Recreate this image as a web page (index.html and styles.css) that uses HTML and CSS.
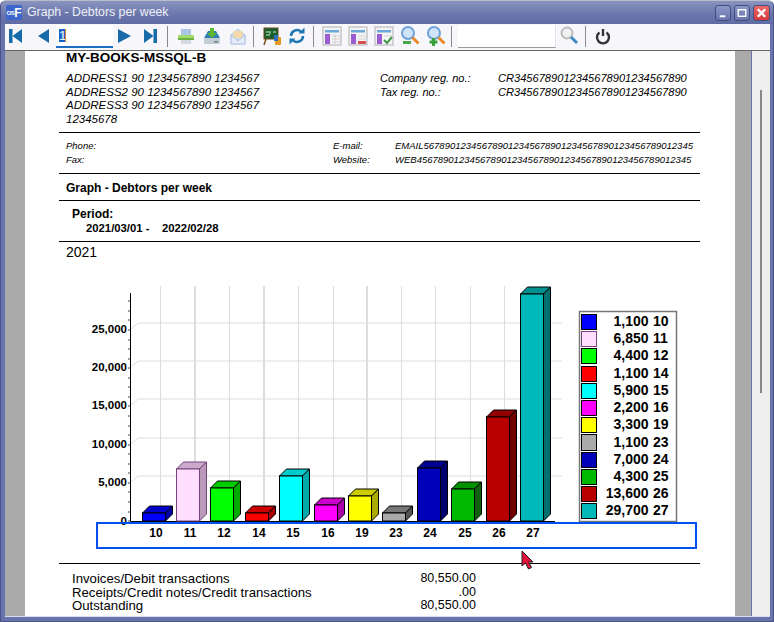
FILE: index.html
```html
<!DOCTYPE html>
<html lang="en">
<head>
<meta charset="utf-8">
<title>Graph - Debtors per week</title>
<link rel="stylesheet" href="styles.css">
</head>
<body>
<div class="window">
  <header class="titlebar">
    <div class="app-icon"><span class="app-os">OS</span><span class="app-f">F</span></div>
    <div class="title">Graph - Debtors per week</div>
    <div class="win-buttons">
      <div class="win-btn"><svg viewBox="0 0 15 15"><rect class="glyph" x="4" y="10" width="6" height="2"/></svg></div>
      <div class="win-btn"><svg viewBox="0 0 15 15"><rect class="glyph-line" x="3.5" y="4" width="8" height="7"/></svg></div>
      <div class="win-btn win-close"><svg viewBox="0 0 16 15"><path class="glyph-x" d="M4 3.5l8 8M12 3.5l-8 8"/></svg></div>
    </div>
  </header>

  <nav class="toolbar">
    <svg class="ico" viewBox="0 0 20 20"><rect class="nav" x="3" y="3" width="3.5" height="14"/><path class="nav" d="M16 3v14L6.500 10z"/></svg>
    <svg class="ico ml7" viewBox="0 0 20 20"><path class="nav" d="M16 3v14L5 10z"/></svg>
    <div class="page-input"><span class="sel">1</span><span class="caret"></span></div>
    <svg class="ico ml2" viewBox="0 0 20 20"><path class="nav" d="M3 3v14L16 10z"/></svg>
    <svg class="ico ml5" viewBox="0 0 20 20"><path class="nav" d="M4 3v14l9.500-7z"/><rect class="nav" x="13.5" y="3" width="3.5" height="14"/></svg>
    <div class="sep ml7"></div>

    <svg class="ico ml8" viewBox="0 0 20 20"><rect x="5" y="3" width="10" height="8" fill="#a9c6e4"/><rect x="2" y="9" width="16" height="5" rx="1" fill="#a2dc6e"/><rect x="2" y="12" width="16" height="2" fill="#6cb044"/><rect x="5" y="14" width="10" height="4" fill="#d4dae2"/></svg>
    <svg class="ico ml6" viewBox="0 0 20 20"><path d="M2 12L6 5h8l4 7z" fill="#2f7fb5"/><rect x="2" y="12" width="16" height="6" rx="1" fill="#c3cdd3"/><rect x="12" y="15" width="4" height="1.5" fill="#6f7d85"/><path d="M8 2h4v5h3l-5 5-5-5h3z" fill="#5cb82e"/></svg>
    <svg class="ico ml6" viewBox="0 0 20 20"><path d="M3 9l7-6 7 6v9H3z" fill="#cddcf0" stroke="#b3c1e2"/><rect x="5.500" y="5" width="9" height="7" fill="#f6d9a8"/><path d="M3 9l7 6 7-6v9H3z" fill="#e3ebf8" stroke="#b3c1e2"/></svg>
    <div class="sep ml5"></div>

    <svg class="ico ml8" viewBox="0 0 20 20"><rect x="2" y="2" width="14" height="11" fill="#17602c" stroke="#6b4a1c"/><path d="M4 6h3M8 5v3M11 6h3M4 9h4" stroke="#d7efc4" fill="none"/><path d="M4 13l-2 6M13 13l2 6" stroke="#7a4f1c" stroke-width="1.5" fill="none"/><rect x="13" y="11" width="6" height="8" rx="1" fill="#e89a20"/><rect x="12" y="9" width="4" height="6" fill="#2f6fc0"/></svg>
    <svg class="ico ml5" viewBox="0 0 20 20"><path class="refresh" d="M4 10a6 6 0 0 1 10-4.400"/><path class="refresh" d="M16 10a6 6 0 0 1-10 4.400"/><path class="refresh-head" d="M11.500 7.500h6v-6z"/><path class="refresh-head" d="M8.500 12.500h-6v6z"/></svg>
    <div class="sep ml6"></div>

    <svg class="ico ml8" viewBox="0 0 20 20"><rect class="sheet" x="1" y="1" width="18" height="18"/><rect class="band" x="3" y="4" width="14" height="2.5"/><rect class="pillar" x="3" y="8" width="5" height="10"/><path class="cells" d="M10 10h8M10 13h8M10 16h8M13 8v10"/></svg>
    <svg class="ico ml6" viewBox="0 0 20 20"><rect class="sheet" x="1" y="1" width="18" height="18"/><rect class="band" x="3" y="4" width="14" height="2.5"/><rect class="pillar" x="3" y="8" width="5" height="10"/><path class="cells" d="M10 10h8M10 13h8"/><rect x="10" y="15" width="8" height="3" fill="#d8504e"/></svg>
    <svg class="ico ml6" viewBox="0 0 20 20"><rect class="sheet" x="1" y="1" width="18" height="18"/><rect class="band" x="3" y="4" width="14" height="2.5"/><rect class="pillar" x="3" y="8" width="5" height="10"/><path class="cells" d="M10 10h8"/><path class="tick" d="M10 14l3 3 5-6"/></svg>
    <svg class="ico ml6" viewBox="0 0 20 20"><circle class="lens" cx="8" cy="7" r="6"/><path class="handle" d="M12.500 11.500l6 6"/><rect x="3" y="15" width="8" height="3" fill="#4aa84a"/></svg>
    <svg class="ico ml6" viewBox="0 0 20 20"><circle class="lens" cx="8" cy="7" r="6"/><path class="handle" d="M12.500 11.500l6 6"/><path d="M6 12h3v2.500h2.500v3H9V20H6v-2.500H3.500v-3H6z" fill="#3aa03a"/></svg>
    <div class="sep ml5"></div>

    <div class="search-input"></div>
    <svg class="ico ml3" viewBox="0 0 20 20"><circle class="lens-grey" cx="8" cy="7" r="5.500"/><path class="handle-blue" d="M12 11l6 6"/></svg>
    <div class="sep ml6"></div>
    <svg class="ico ml7" viewBox="0 0 20 20"><path class="power" d="M6.500 6.500a6 6 0 1 0 7 0"/><path class="power" d="M10 3v7"/></svg>
  </nav>

  <main class="viewer">
    <div class="gutter"></div>
    <section class="page">
      <div class="company">MY-BOOKS-MSSQL-B</div>
      <div class="address">
        <div class="addr-left">
          <div>ADDRESS1 90 1234567890 1234567</div>
          <div>ADDRESS2 90 1234567890 1234567</div>
          <div>ADDRESS3 90 1234567890 1234567</div>
          <div>12345678</div>
        </div>
        <div class="addr-labels">
          <div>Company reg. no.:</div>
          <div>Tax reg. no.:</div>
        </div>
        <div class="addr-values">
          <div>CR3456789012345678901234567890</div>
          <div>CR3456789012345678901234567890</div>
        </div>
      </div>
      <div class="rule"></div>
      <div class="contact">
        <div>Phone:</div>
        <div>E-mail:</div>
        <div class="c-value">EMAIL567890123456789012345678901234567890123456789012345</div>
        <div>Fax:</div>
        <div>Website:</div>
        <div class="c-value">WEB4567890123456789012345678901234567890123456789012345</div>
      </div>
      <div class="rule"></div>
      <div class="report-title">Graph - Debtors per week</div>
      <div class="rule"></div>
      <div class="period">
        <div class="period-label">Period:</div>
        <div class="period-range">2021/03/01 -&nbsp;&nbsp;&nbsp; 2022/02/28</div>
      </div>
      <div class="rule"></div>
      <div class="year">2021</div>

      <svg class="chart" viewBox="25 262 710 301" width="710" height="301">
        <g class="grid">
          <path d="M130 330l8-7H562M130 368l8-7H562M130 406l8-7H562M130 445l8-7H562M130 483l8-7H562"/>
          <path d="M160.500 286V514M229.500 286V514M298.500 286V514M333.500 286V514M401.500 286V514M435.500 286V514M470.500 286V514M504.500 286V514"/>
          <path class="grid-thick" d="M195 286V514M264 286V514M367 286V514"/>
        </g>
        <g class="axis">
          <path d="M130.500 293V521.500H555"/>
          <path class="ticks" d="M128 330h2M128 368h2M128 406h2M128 445h2M128 483h2M128 521h2M128 301h2M128 311h2M128 320h2M128 340h2M128 349h2M128 359h2M128 378h2M128 387h2M128 397h2M128 416h2M128 426h2M128 435h2M128 454h2M128 464h2M128 473h2M128 492h2M128 502h2M128 512h2"/>
        </g>
        <g class="y-labels">
          <text x="127" y="333">25,000</text>
          <text x="127" y="371">20,000</text>
          <text x="127" y="409">15,000</text>
          <text x="127" y="448">10,000</text>
          <text x="127" y="486">5,000</text>
          <text x="127" y="525">0</text>
        </g>

        <g class="bar b10"><polygon class="t" points="142.500,513 149.500,506 172.500,506 165.500,513"/><polygon class="s" points="165.500,513 172.500,506 172.500,514 165.500,521"/><rect class="f" x="142.500" y="513" width="23" height="8"/></g>
        <g class="bar b11"><polygon class="t" points="176.500,469 183.500,462 206.500,462 199.500,469"/><polygon class="s" points="199.500,469 206.500,462 206.500,514 199.500,521"/><rect class="f" x="176.500" y="469" width="23" height="52"/></g>
        <g class="bar b12"><polygon class="t" points="210.500,488 217.500,481 240.500,481 233.500,488"/><polygon class="s" points="233.500,488 240.500,481 240.500,514 233.500,521"/><rect class="f" x="210.500" y="488" width="23" height="33"/></g>
        <g class="bar b14"><polygon class="t" points="245.500,513 252.500,506 275.500,506 268.500,513"/><polygon class="s" points="268.500,513 275.500,506 275.500,514 268.500,521"/><rect class="f" x="245.500" y="513" width="23" height="8"/></g>
        <g class="bar b15"><polygon class="t" points="279.500,476 286.500,469 309.500,469 302.500,476"/><polygon class="s" points="302.500,476 309.500,469 309.500,514 302.500,521"/><rect class="f" x="279.500" y="476" width="23" height="45"/></g>
        <g class="bar b16"><polygon class="t" points="314.500,505 321.500,498 344.500,498 337.500,505"/><polygon class="s" points="337.500,505 344.500,498 344.500,514 337.500,521"/><rect class="f" x="314.500" y="505" width="23" height="16"/></g>
        <g class="bar b19"><polygon class="t" points="348.500,496 355.500,489 378.500,489 371.500,496"/><polygon class="s" points="371.500,496 378.500,489 378.500,514 371.500,521"/><rect class="f" x="348.500" y="496" width="23" height="25"/></g>
        <g class="bar b23"><polygon class="t" points="382.500,513 389.500,506 412.500,506 405.500,513"/><polygon class="s" points="405.500,513 412.500,506 412.500,514 405.500,521"/><rect class="f" x="382.500" y="513" width="23" height="8"/></g>
        <g class="bar b24"><polygon class="t" points="417.500,468 424.500,461 447.500,461 440.500,468"/><polygon class="s" points="440.500,468 447.500,461 447.500,514 440.500,521"/><rect class="f" x="417.500" y="468" width="23" height="53"/></g>
        <g class="bar b25"><polygon class="t" points="451.500,489 458.500,482 481.500,482 474.500,489"/><polygon class="s" points="474.500,489 481.500,482 481.500,514 474.500,521"/><rect class="f" x="451.500" y="489" width="23" height="32"/></g>
        <g class="bar b26"><polygon class="t" points="486.500,417 493.500,410 516.500,410 509.500,417"/><polygon class="s" points="509.500,417 516.500,410 516.500,514 509.500,521"/><rect class="f" x="486.500" y="417" width="23" height="104"/></g>
        <g class="bar b27"><polygon class="t" points="520.500,294 527.500,287 550.500,287 543.500,294"/><polygon class="s" points="543.500,294 550.500,287 550.500,514 543.500,521"/><rect class="f" x="520.500" y="294" width="23" height="227"/></g>

        <g class="x-labels">
          <text x="156" y="537">10</text><text x="190" y="537">11</text><text x="224" y="537">12</text><text x="259" y="537">14</text>
          <text x="293" y="537">15</text><text x="328" y="537">16</text><text x="362" y="537">19</text><text x="396" y="537">23</text>
          <text x="430" y="537">24</text><text x="465" y="537">25</text><text x="499" y="537">26</text><text x="533" y="537">27</text>
        </g>

        <rect class="legend-box" x="579.500" y="311.500" width="97" height="210"/>
        <g class="bar b10"><rect class="f" x="581.500" y="314.500" width="15" height="15"/></g>
        <g class="bar b11"><rect class="f" x="581.500" y="331.500" width="15" height="15"/></g>
        <g class="bar b12"><rect class="f" x="581.500" y="348.500" width="15" height="15"/></g>
        <g class="bar b14"><rect class="f" x="581.500" y="366.500" width="15" height="15"/></g>
        <g class="bar b15"><rect class="f" x="581.500" y="383.500" width="15" height="15"/></g>
        <g class="bar b16"><rect class="f" x="581.500" y="400.500" width="15" height="15"/></g>
        <g class="bar b19"><rect class="f" x="581.500" y="417.500" width="15" height="15"/></g>
        <g class="bar b23"><rect class="f" x="581.500" y="434.500" width="15" height="16"/></g>
        <g class="bar b24"><rect class="f" x="581.500" y="452.500" width="15" height="15"/></g>
        <g class="bar b25"><rect class="f" x="581.500" y="469.500" width="15" height="15"/></g>
        <g class="bar b26"><rect class="f" x="581.500" y="486.500" width="15" height="15"/></g>
        <g class="bar b27"><rect class="f" x="581.500" y="503.500" width="15" height="15"/></g>
        <g class="legend-amt">
          <text x="648.500" y="326">1,100</text><text x="648.500" y="343">6,850</text><text x="648.500" y="360">4,400</text><text x="648.500" y="378">1,100</text>
          <text x="648.500" y="395">5,900</text><text x="648.500" y="412">2,200</text><text x="648.500" y="429">3,300</text><text x="648.500" y="447">1,100</text>
          <text x="648.500" y="464">7,000</text><text x="648.500" y="481">4,300</text><text x="648.500" y="498">13,600</text><text x="648.500" y="515">29,700</text>
        </g>
        <g class="legend-code">
          <text x="653" y="326">10</text><text x="653" y="343">11</text><text x="653" y="360">12</text><text x="653" y="378">14</text>
          <text x="653" y="395">15</text><text x="653" y="412">16</text><text x="653" y="429">19</text><text x="653" y="447">23</text>
          <text x="653" y="464">24</text><text x="653" y="481">25</text><text x="653" y="498">26</text><text x="653" y="515">27</text>
        </g>
      </svg>

      <div class="rule"></div>
      <div class="totals">
        <div class="total-row"><span>Invoices/Debit transactions</span><span class="amount">80,550.00</span></div>
        <div class="total-row"><span>Receipts/Credit notes/Credit transactions</span><span class="amount">.00</span></div>
        <div class="total-row"><span>Outstanding</span><span class="amount">80,550.00</span></div>
      </div>
    </section>
    <div class="gutter gutter-right"></div>
    <div class="scrollbar"><div class="thumb"></div></div>
  </main>

  <div class="highlight"></div>
  <svg class="cursor" viewBox="0 0 14 20" width="14" height="20"><path d="M1 1v15l3.500-3 3 6 3-1.500-3-5.500H12z"/></svg>
</div>
</body>
</html>
```

FILE: styles.css
```css
* { box-sizing: border-box; }
html, body { margin: 0; padding: 0; background: #fff; }
body { font-family: "Liberation Sans", Arial, sans-serif; color: #000; }

.window {
  position: relative;
  width: 774px;
  height: 622px;
  overflow: hidden;
  display: flex;
  flex-direction: column;
  padding: 0 3px 5px 4px;
  background: #6874ab;
  border: 1px solid #4a5488;
  border-top-color: #b9bcc9;
  border-radius: 6px 6px 0 0;
}

/* Title bar */
.titlebar {
  flex: none;
  height: 23px;
  margin: 0 -3px 0 -4px;
  padding: 4px 3px 0 5px;
  display: flex;
  align-items: flex-start;
  background: linear-gradient(#8a94c0, #6a76ab 60%, #5f6ca3);
}
.app-icon {
  width: 16px;
  height: 15px;
  border-radius: 2px;
  background: #3c66cc;
  color: #fff;
  display: flex;
  align-items: center;
  justify-content: center;
  font-weight: bold;
  overflow: hidden;
}
.app-os { font-size: 6px; letter-spacing: -0.5px; }
.app-f { font-size: 12px; }
.title {
  margin-left: 5px;
  font-size: 12.300px;
  line-height: 15px;
  color: #eef0f8;
}
.win-buttons { margin-left: auto; display: flex; gap: 3px; }
.win-btn {
  width: 16px;
  height: 16px;
  border: 1px solid #414c80;
  border-radius: 3px;
  background: linear-gradient(#8e98c6, #6874ac);
}
.win-btn svg { display: block; width: 100%; height: 100%; }
.win-close { width: 17px; background: linear-gradient(#ee6a66, #d83a3a); }
.glyph { fill: #fff; }
.glyph-line { fill: none; stroke: #fff; stroke-width: 1.5; }
.glyph-x { fill: none; stroke: #fff; stroke-width: 2.5; }

/* Toolbar */
.toolbar {
  flex: none;
  height: 26px;
  padding: 2px 0 0 1px;
  display: flex;
  align-items: flex-start;
  background: #f7f7fb;
}
.ico { width: 20px; height: 20px; flex: none; display: block; }
.ml2 { margin-left: 2px; }
.ml3 { margin-left: 3px; }
.ml5 { margin-left: 5px; }
.ml6 { margin-left: 6px; }
.ml7 { margin-left: 7px; }
.ml8 { margin-left: 8px; }
.nav { fill: #176ba8; }
.sep { width: 1px; height: 21px; background: #8a8a8a; flex: none; }
.page-input {
  width: 57px;
  height: 23px;
  margin: -1px 0 0 3px;
  padding: 4px 0 0 3px;
  background: #fff;
  border-bottom: 2px solid #1a6fc0;
  display: flex;
  align-items: flex-start;
}
.sel {
  background: #1763c8;
  color: #fff;
  width: 6px;
  height: 13px;
  font-size: 13px;
  line-height: 13px;
  overflow: hidden;
}
.caret { width: 1px; height: 13px; background: #e08a3c; }
.search-input {
  width: 98px;
  height: 23px;
  margin: -1px 0 0 6px;
  background: #fff;
  border-bottom: 1px solid #9a9a9a;
  border-right: 1px solid #e4e4e8;
}
.refresh { fill: none; stroke: #1f78b4; stroke-width: 2.6; }
.refresh-head { fill: #1f78b4; }
.sheet { fill: #f4f4f4; stroke: #b0b0b0; }
.band { fill: #6ea8da; }
.pillar { fill: #9a5cd0; }
.cells { fill: none; stroke: #d4d4d4; }
.tick { fill: none; stroke: #3f9a4a; stroke-width: 2; }
.lens { fill: #cfe4f8; stroke: #6fa2d8; stroke-width: 2; }
.handle { fill: none; stroke: #e88a2c; stroke-width: 3; }
.lens-grey { fill: #f2f2f2; stroke: #bbb; stroke-width: 2; }
.handle-blue { fill: none; stroke: #3f8ac4; stroke-width: 3; }
.power { fill: none; stroke: #333; stroke-width: 2.4; }

/* Viewer */
.viewer {
  height: 566px;
  flex: none;
  display: flex;
  border-top: 1px solid #666;
  box-shadow: 0 1px 0 #d8dcee;
}
.gutter { width: 20px; background: #aaa; flex: none; }
.gutter-right { width: 16px; }
.scrollbar {
  width: 18px;
  margin-left: 1px;
  background: #eee;
  padding: 39px 0 0 8px;
  flex: none;
}
.thumb { width: 2px; height: 303px; background: #888; }

/* Report page */
.page {
  width: 710px;
  flex: none;
  overflow: hidden;
  background: #fff;
  padding: 0 35px 0 34px;
}
.rule { height: 1px; background: #000; }
.company {
  height: 21px;
  padding-left: 7px;
  font-size: 13.500px;
  font-weight: bold;
  line-height: 14px;
}
.address { height: 60px; display: flex; font-size: 11.500px; font-style: italic; line-height: 13.700px; }
.addr-left { width: 321px; padding-left: 7px; flex: none; }
.addr-labels { width: 118px; flex: none; font-size: 11px; }
.addr-values { flex: none; font-size: 11.100px; white-space: nowrap; }

.contact {
  height: 40px;
  padding: 6px 4px 0 7px;
  display: grid;
  grid-template-columns: 267px 62px 1fr;
  grid-auto-rows: 14px;
  font-size: 9.500px;
  font-style: italic;
  line-height: 14px;
}
.c-value { white-space: nowrap; }
.report-title {
  height: 26px;
  padding: 1px 0 0 7px;
  font-size: 12px;
  font-weight: bold;
  line-height: 26px;
}
.period { height: 40px; padding: 7px 0 0 13px; font-size: 12px; font-weight: bold; line-height: 13.500px; }
.period-range { padding-left: 14px; font-size: 11.300px; }
.year { height: 20px; padding-left: 7px; font-size: 14px; line-height: 20px; }

/* Chart */
.chart { display: block; margin-left: -34px; }
.grid path { fill: none; stroke: #ddd; stroke-width: 1; }
.grid .grid-thick { stroke-width: 2; }
.axis path { fill: none; stroke: #000; stroke-width: 1; }
.axis .ticks { stroke: #444; }
.y-labels text { font-size: 11.500px; font-weight: bold; text-anchor: end; }
.x-labels text { font-size: 12px; font-weight: bold; text-anchor: middle; }
.legend-amt text { font-size: 14px; font-weight: bold; text-anchor: end; }
.legend-code text { font-size: 14px; font-weight: bold; }
.legend-box { fill: #fff; stroke: #777; stroke-width: 1.500; }

.bar { --e: #000; }
.bar .f { fill: var(--f); stroke: var(--e); }
.bar .t { fill: var(--t); stroke: var(--e); }
.bar .s { fill: var(--s); stroke: var(--e); }
.b10 { --f: #0000ff; --t: #0000cc; --s: #0000aa; }
.b11 { --f: #ffddff; --t: #ccaacc; --s: #bb99bb; --e: #74447a; }
.b12 { --f: #00ff00; --t: #00cc00; --s: #00aa00; }
.b14 { --f: #ff0000; --t: #cc0000; --s: #aa0000; }
.b15 { --f: #00ffff; --t: #00cccc; --s: #00aaaa; }
.b16 { --f: #ff00ff; --t: #cc00cc; --s: #aa00aa; }
.b19 { --f: #ffff00; --t: #cccc00; --s: #aaaa00; }
.b23 { --f: #aaaaaa; --t: #777777; --s: #555555; }
.b24 { --f: #0000b8; --t: #000090; --s: #000070; }
.b25 { --f: #00b800; --t: #009000; --s: #106010; }
.b26 { --f: #b80000; --t: #900000; --s: #700000; }
.b27 { --f: #00b8b8; --t: #009090; --s: #006f6f; }

/* Totals */
.totals { padding: 8px 0 0 13px; width: 417px; font-size: 13.200px; line-height: 13.500px; }
.total-row { display: flex; justify-content: space-between; }
.amount { font-size: 12.500px; }

/* Overlays */
.highlight {
  position: absolute;
  left: 95px;
  top: 521px;
  width: 601px;
  height: 27px;
  border: 2px solid #0050f0;
}
.cursor { position: absolute; left: 520px; top: 549px; }
.cursor path { fill: #e3103c; stroke: #222; stroke-width: 1; }
```
